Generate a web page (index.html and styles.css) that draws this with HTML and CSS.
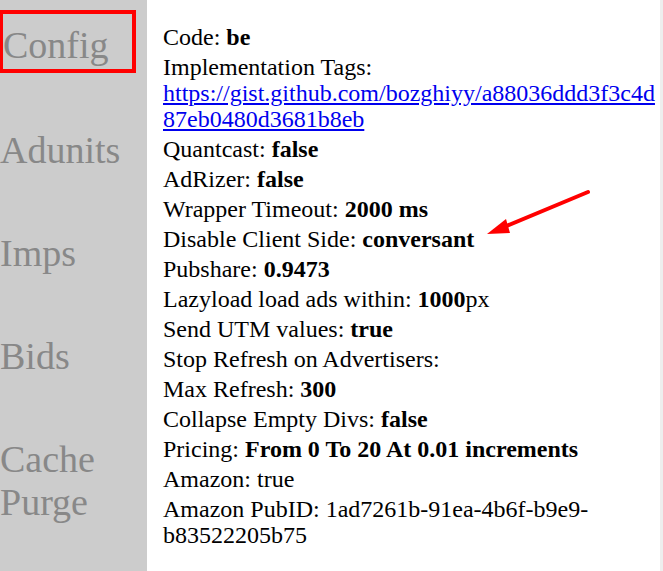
FILE: index.html
```html
<!DOCTYPE html>
<html lang="en">
<head>
  <meta charset="UTF-8">
  <title>Config</title>
  <link rel="stylesheet" href="styles.css">
</head>
<body>

  <div class="pagina">
    <nav class="menu">
      <a class="item activo">Config</a>
      <a class="item">Adunits</a>
      <a class="item">Imps</a>
      <a class="item">Bids</a>
      <a class="item">Cache Purge</a>
    </nav>

    <div class="contenido">
      <div class="fila">Code: <b>be</b></div>
      <div class="fila">Implementation Tags: <a href="#">https://gist.github.com/bozghiyy/a88036ddd3f3c4d87eb0480d3681b8eb</a></div>
      <div class="fila">Quantcast: <b>false</b></div>
      <div class="fila">AdRizer: <b>false</b></div>
      <div class="fila">Wrapper Timeout: <b>2000 ms</b></div>
      <div class="fila">Disable Client Side: <b>conversant</b></div>
      <div class="fila">Pubshare: <b>0.9473</b></div>
      <div class="fila">Lazyload load ads within: <b>1000</b>px</div>
      <div class="fila">Send UTM values: <b>true</b></div>
      <div class="fila">Stop Refresh on Advertisers: </div>
      <div class="fila">Max Refresh: <b>300</b></div>
      <div class="fila">Collapse Empty Divs: <b>false</b></div>
      <div class="fila">Pricing: <b>From 0 To 20 At 0.01 increments</b></div>
      <div class="fila">Amazon: true</div>
      <div class="fila">Amazon PubID: 1ad7261b-91ea-4b6f-b9e9-b83522205b75</div>
    </div>

    <svg class="flecha" width="120" height="60" viewBox="0 0 120 60">
      <line x1="106" y1="8" x2="22" y2="43" stroke="#f00" stroke-width="4" stroke-linecap="round"/>
      <polygon points="5,50 24,35 28,49" fill="#f00"/>
    </svg>
  </div>

</body>
</html>
```

FILE: styles.css
```css
body {
  margin: 0;
  font-family: "Liberation Serif", "Times New Roman", serif;
  background-color: #fff;
}

.pagina {
  position: relative;
  display: flex;
  min-height: 571px;
  border-right: 3px solid #eee;
}

.menu {
  width: 147px;
  flex-shrink: 0;
  background-color: #ccc;
  display: flex;
  flex-direction: column;
  padding-top: 10px;
}

.item {
  display: block;
  font-size: 38px;
  line-height: 43px;
  color: #888;
  margin-bottom: 60px;
  padding: 0;
}

.item.activo {
  width: 129px;
  border: 4px solid #f00;
  margin-left: -1px;
  padding: 10px 0 2px 0;
  margin-bottom: 56px;
}

.contenido {
  padding: 22px 0 0 163px;
  margin-left: -147px;
  width: 498px;
  font-size: 24px;
  color: #000;
}

.fila {
  line-height: 26px;
  padding: 2px 0;
  overflow-wrap: break-word;
}

.fila a {
  color: #00e;
}

.flecha {
  position: absolute;
  left: 482px;
  top: 184px;
}
```
